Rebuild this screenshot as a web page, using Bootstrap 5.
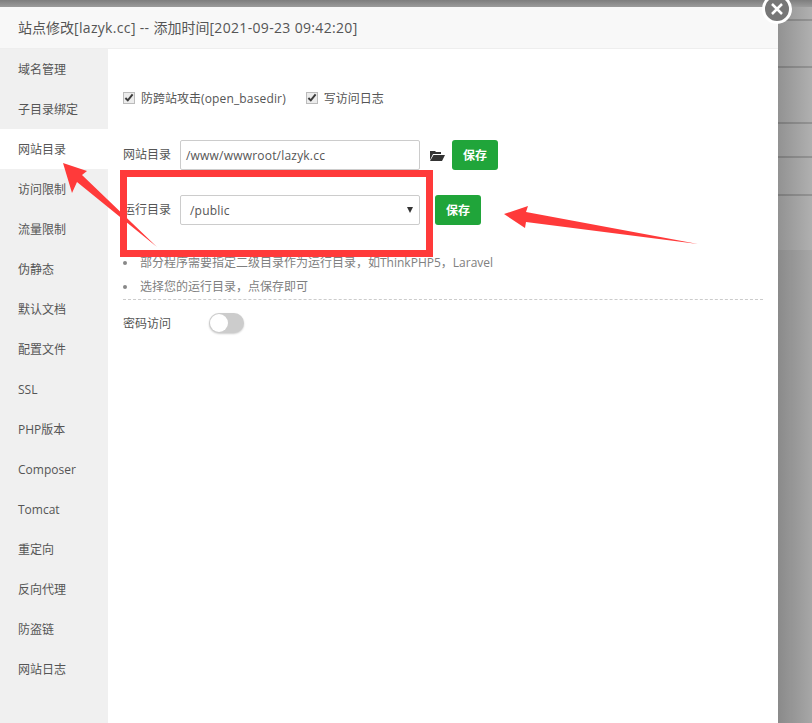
<!DOCTYPE html>
<html lang="zh"><head><meta charset="utf-8">
<link href="https://cdn.jsdelivr.net/npm/bootstrap@5.3.0/dist/css/bootstrap.min.css" rel="stylesheet">
<style>
html,body{height:723px;overflow:hidden}
body{background:linear-gradient(90deg,#929292 778px,#b0b0b0 812px);font:12px "Open Sans","Noto Sans CJK SC",sans-serif;color:#555;position:relative}
.backdrop-band{position:absolute;left:778px;right:0;height:2px;background:rgba(0,0,0,.16)}
.lower-shade{position:absolute;left:778px;right:0;top:250px;bottom:0;background:rgba(0,0,0,.05)}
.top-strip{height:7px;background:linear-gradient(#7e7e7e,#9b9b9b)}
.sheet{width:778px;height:716px;background:#fff;position:relative}
.sheet-head{height:42px;background:#f8f8f8;border-bottom:1px solid #eee;padding-left:18px;font-size:14px;line-height:41px;color:#555}
.wide-latin{letter-spacing:.33px}
.wide-slight{letter-spacing:.15px}
.side-tabs{width:108px;background:#f0f0f0;height:674px}
.side-tabs div{height:40px;line-height:42px;padding-left:18px;color:#555}
.side-tabs .on{background:#fff}
.pane{padding:0 15px;width:670px}
.check-row{padding-top:40px;height:80px;gap:20px;line-height:20px}
.check-row input{margin:0 6px 0 0;width:12px;height:12px;vertical-align:-1px;accent-color:#ececec;outline:1px solid #bbb;outline-offset:-1px;border-radius:2px}
.field-row{height:30px;line-height:32px}
.field-lbl{width:57px}
.fake-input{width:240px;height:30px;border:1px solid #ccc;border-radius:2px;padding-left:5px;color:#555;font-size:12px;letter-spacing:.2px;line-height:29px}
.fake-input.sel{padding-left:9px;position:relative}
.sel-caret{position:absolute;right:6px;top:11px;width:0;height:0;border:3px solid transparent;border-top:6px solid #333;border-bottom:0}
.save-btn{width:46px;height:30px;background:#20a53a;color:#fff;border:0;border-radius:3px;padding:0;font-size:12px;font-weight:600}
.folder{width:15px;height:13px;margin:0 7px 0 10px}
.tips{list-style:none;padding:0;margin:0;color:#808080;font-size:12px}
.tips li{height:24px;line-height:24px;padding-left:17px;position:relative}
.tips li::before{content:"";position:absolute;left:0;top:10px;width:4px;height:4px;border-radius:50%;background:#888}
.dash{border-top:1px dashed #ccc;height:14px}
.switch-track{width:35px;height:20px;border-radius:10px;background:#ccc;position:relative;margin-left:38px;box-shadow:0 1px 2px rgba(0,0,0,.2)}
.switch-knob{position:absolute;left:1px;top:1px;width:18px;height:18px;border-radius:50%;background:#fff}
.close-x{position:absolute;left:762px;top:-6px;width:30px;height:30px;border-radius:50%;background:#777;border:3px solid #fff}
.overlay{position:absolute;left:0;top:0;pointer-events:none}
</style></head><body>
<div class="backdrop-band" style="top:19px"></div>
<div class="backdrop-band" style="top:66px"></div>
<div class="backdrop-band" style="top:122px"></div>
<div class="backdrop-band" style="top:156px"></div>
<div class="backdrop-band" style="top:194px"></div>
<div class="lower-shade"></div>
<div class="top-strip"></div>
<div class="sheet">
 <div class="sheet-head">站点修改<span class="wide-latin">[lazyk.cc] -- </span>添加时间<span class="wide-latin">[2021-09-23 09:42:20]</span></div>
 <div class="d-flex">
  <div class="side-tabs">
   <div>域名管理</div><div>子目录绑定</div><div class="on">网站目录</div><div>访问限制</div><div>流量限制</div><div>伪静态</div><div>默认文档</div><div>配置文件</div><div>SSL</div><div>PHP版本</div><div>Composer</div><div>Tomcat</div><div>重定向</div><div>反向代理</div><div>防盗链</div><div>网站日志</div>
  </div>
  <div class="pane">
   <div class="d-flex check-row"><label><input type="checkbox" checked>防跨站攻击<span class="wide-slight">(open_basedir)</span></label><label><input type="checkbox" checked>写访问日志</label></div>
   <div class="d-flex align-items-center field-row" style="margin-top:11px">
    <span class="field-lbl">网站目录</span><div class="fake-input">/www/wwwroot/lazyk.cc</div>
    <svg class="folder" viewBox="0 0 15 13"><path fill="#333" d="M0 2h5l1 1h5v2H3L0 11zM3.500 6H15l-3 6H0z"/></svg>
    <button class="save-btn">保存</button>
   </div>
   <div class="d-flex align-items-center field-row" style="margin-top:25px">
    <span class="field-lbl">运行目录</span><div class="fake-input sel">/public<i class="sel-caret"></i></div>
    <button class="save-btn" style="margin-left:15px">保存</button>
   </div>
   <ul class="tips" style="margin-top:26px"><li>部分程序需要指定二级目录作为运行目录，如ThinkPHP5，Laravel</li><li>选择您的运行目录，点保存即可</li></ul>
   <div class="dash"></div>
   <div class="d-flex align-items-center"><span style="width:48px">密码访问</span><div class="switch-track"><div class="switch-knob"></div></div></div>
  </div>
 </div>
</div>
<div class="close-x"><svg width="24" height="24" viewBox="0 0 24 24" class="d-block"><path d="M7 7l10 10M17 7L7 17" stroke="#fff" stroke-width="2.500"/></svg></div>
<svg class="overlay" width="812" height="723">
 <rect x="123.500" y="173.500" width="306" height="80" fill="none" stroke="#ff3a3a" stroke-width="7"/>
 <path fill="#ff3a3a" d="M63 163L87 171 82 175 157 247 77 182 72 193z"/>
 <path fill="#ff3a3a" d="M504 214L528 206 526 212 698 244 526 222 525 228z"/>
</svg>
</body></html>
